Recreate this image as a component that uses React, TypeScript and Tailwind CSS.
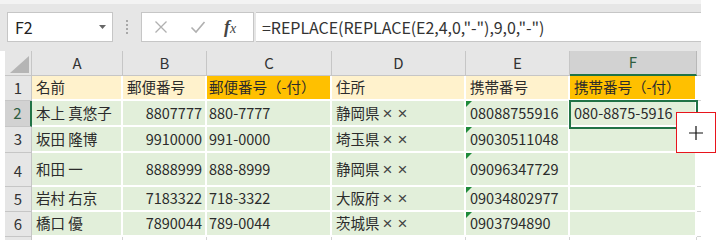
import React from "react";

const FONT = '"Noto Sans CJK JP", "Noto Sans", sans-serif';

const colW = [91, 84, 125, 134, 104, 127];
const letters = ["A", "B", "C", "D", "E", "F"];

type Row = { h: number; cells: string[] };
const rows: Row[] = [
  { h: 25, cells: ["名前", "郵便番号", "郵便番号（-付）", "住所", "携帯番号", "携帯番号（-付）"] },
  { h: 26, cells: ["本上 真悠子", "8807777", "880-7777", "静岡県××", "08088755916", "080-8875-5916"] },
  { h: 26, cells: ["坂田 隆博", "9910000", "991-0000", "埼玉県××", "09030511048", ""] },
  { h: 34, cells: ["和田 一", "8888999", "888-8999", "静岡県××", "09096347729", ""] },
  { h: 25, cells: ["岩村 右京", "7183322", "718-3322", "大阪府××", "09034802977", ""] },
  { h: 25, cells: ["橋口 優", "7890044", "789-0044", "茨城県××", "0903794890", ""] },
];

function cellBg(r: number, c: number) {
  if (r === 0) return c === 2 || c === 5 ? "bg-[#ffc000]" : "bg-[#fff2cc]";
  return "bg-[#e2efda]";
}

function CellText({ t }: { t: string }) {
  if (t.endsWith("××")) {
    return (
      <span className="leading-none flex items-center">
        {t.slice(0, -2)}
        <span className="ml-[3px] mr-[5px] text-[17px] text-[#444]" style={{ fontFamily: '"Liberation Sans", sans-serif' }}>×</span>
        <span className="text-[17px] text-[#444]" style={{ fontFamily: '"Liberation Sans", sans-serif' }}>×</span>
      </span>
    );
  }
  return <span className="leading-none">{t}</span>;
}

export default function App() {
  return (
    <div className="relative w-[726px] h-[248px] bg-white overflow-hidden" style={{ fontFamily: FONT }}>
      <div className="w-[701px]">
        <div className="h-[4px] bg-[#f3f3f3]" />
        {/* toolbar */}
        <div className="h-[47px] bg-[#e6e6e6] flex items-start pt-[8px]">
          <div className="ml-[7px] w-[106px] h-[30px] bg-white border border-[#c6c6c6] flex items-center justify-between pl-[7px] pr-[6px]">
            <span className="text-[16px] text-[#222] leading-none">F2</span>
            <svg width="7" height="4" viewBox="0 0 7 4"><path d="M0 0h7L3.5 4z" fill="#666" /></svg>
          </div>
          <div className="ml-[12px] w-[4px] h-[30px] flex flex-col items-center justify-center gap-[2px]">
            {[0, 1, 2, 3].map((i) => (
              <div key={i} className="w-[2px] h-[2px] bg-[#a8a8a8]" />
            ))}
          </div>
          <div className="ml-[12px] w-[113px] h-[30px] bg-white border border-[#c6c6c6] flex items-center">
            <svg className="ml-[12px]" width="14" height="14" viewBox="0 0 14 14">
              <path d="M1.5 1.5l11 11M12.5 1.5l-11 11" stroke="#b0b0b0" strokeWidth="1.3" fill="none" />
            </svg>
            <svg className="ml-[22px]" width="16" height="14" viewBox="0 0 16 14">
              <path d="M1.5 7.5l4.5 4.5 8.5-10" stroke="#b0b0b0" strokeWidth="1.6" fill="none" />
            </svg>
            <span
              className="ml-[18px] text-[18px] text-[#444] italic font-bold leading-none"
              style={{ fontFamily: '"Liberation Serif", serif' }}
            >
              f<span className="text-[14px] font-normal">x</span>
            </span>
          </div>
          <div className="ml-[2px] flex-1 h-[30px] bg-white border-y border-[#c6c6c6] flex items-center pl-[6px]">
            <span className="text-[16px] text-[#333] leading-none tracking-[-0.05px]">=REPLACE(REPLACE(E2,4,0,"-"),9,0,"-")</span>
          </div>
        </div>
        {/* grid */}
        <div className="flex flex-col">
          {/* column header row */}
          <div className="flex h-[25px]">
            <div className="w-[5px] bg-white" />
            <div className="w-[27px] bg-[#e6e6e6] border-r border-b border-[#c6c6c6] relative">
              <svg className="absolute right-[2px] bottom-[2px]" width="19" height="17" viewBox="0 0 19 17">
                <path d="M19 0V17H0z" fill="#b5b5b5" />
              </svg>
            </div>
            {letters.map((l, i) => (
              <div
                key={l}
                style={{ width: colW[i] }}
                className={
                  i === 5
                    ? "bg-[#d2d2d2] border-r border-[#b8b8b8] border-b-2 border-b-[#217346] flex items-center justify-center text-[15px] text-[#2f5e41]"
                    : "bg-[#e6e6e6] border-r border-b border-[#c6c6c6] flex items-center justify-center text-[15px] text-[#333]"
                }
              >
                {l}
              </div>
            ))}
            <div className="flex-1 bg-[#e6e6e6] border-b border-[#c6c6c6]" />
          </div>
          {rows.map((row, r) => (
            <div key={r} className="flex" style={{ height: row.h }}>
              <div className="w-[5px] bg-white" />
              <div
                className={
                  r === 1
                    ? "w-[27px] bg-[#d2d2d2] border-b border-[#c6c6c6] border-r-2 border-r-[#217346] flex items-center justify-center text-[15px] text-[#2f5e41]"
                    : "w-[27px] bg-[#e6e6e6] border-r border-b border-[#c6c6c6] flex items-center justify-center text-[15px] text-[#333]"
                }
              >
                <span className={r === 3 ? "mt-[4px]" : ""}>{r + 1}</span>
              </div>
              {row.cells.map((t, c) => (
                <div
                  key={c}
                  style={{ width: colW[c] }}
                  className={`relative ${cellBg(r, c)} border-b-2 border-r-2 border-white flex items-center text-[14.5px] text-[#2b2b2b] whitespace-nowrap overflow-visible ${
                    c === 1 && r > 0 ? "justify-end pr-[3px]" : c === 2 ? "pl-[2px]" : "pl-[4px]"
                  }`}
                >
                  {c === 4 && r > 0 && (
                    <svg className="absolute left-0 top-0" width="6" height="6" viewBox="0 0 6 6">
                      <path d="M0 0h6L0 6z" fill="#1e8a3a" />
                    </svg>
                  )}
                  <CellText t={t} />
                </div>
              ))}
              <div className="flex-1 bg-white border-b border-[#d4d4d4]" />
            </div>
          ))}
          {/* row 7 stub */}
          <div className="flex h-[3px]">
            <div className="w-[5px] bg-white" />
            <div className="w-[27px] bg-[#e6e6e6] border-r border-[#c6c6c6]" />
            {colW.map((w, i) => (
              <div key={i} style={{ width: w }} className="bg-white border-r border-[#d4d4d4]" />
            ))}
          </div>
        </div>
      </div>
      {/* selection border */}
      <div className="absolute left-[569px] top-[100px] w-[129px] h-[29px] border-2 border-[#217346]" />
      {/* cursor highlight */}
      <div className="absolute left-[676px] top-[112px] w-[40px] h-[41px] bg-white border-[1.5px] border-[#e8141c] flex items-center justify-center">
        <svg width="14" height="14" viewBox="0 0 14 14">
          <path d="M7 0v14M0 7h14" stroke="#111" strokeWidth="1.2" />
        </svg>
      </div>
    </div>
  );
}
